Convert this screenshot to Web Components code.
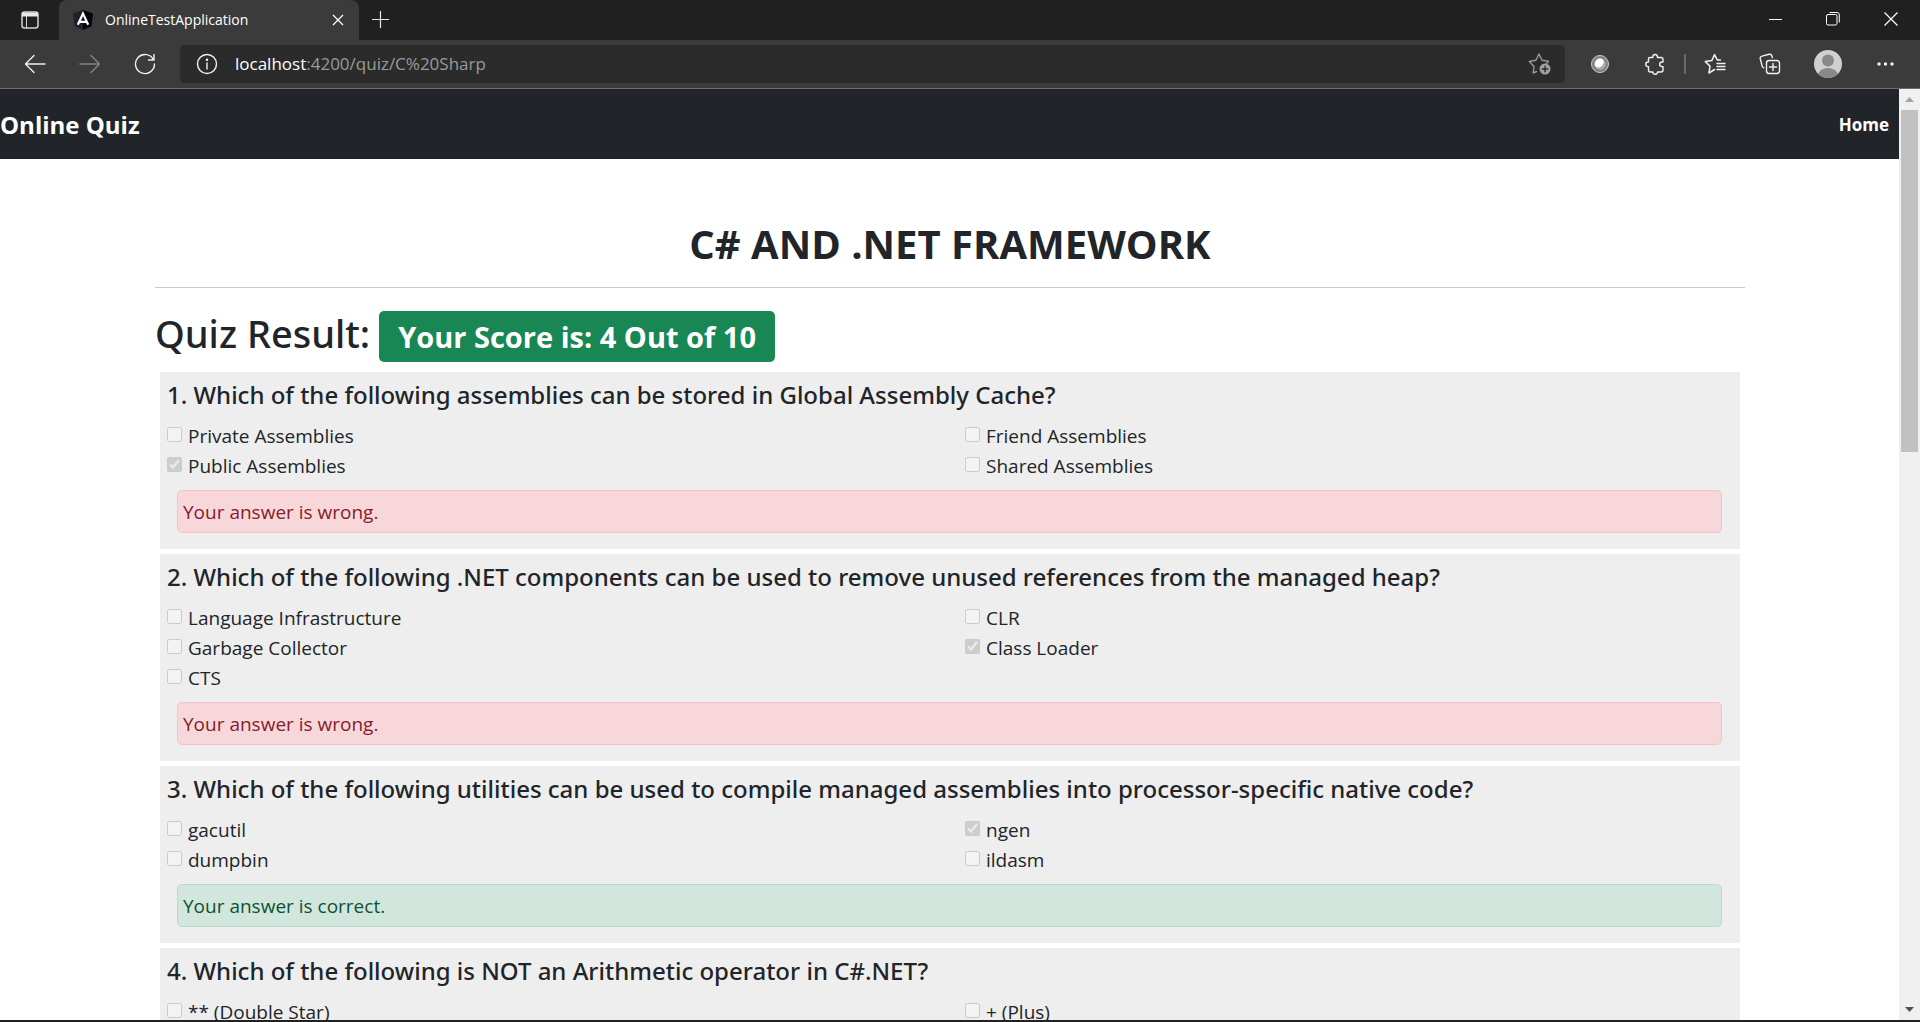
<!DOCTYPE html>
<html lang="en">
<head>
<meta charset="utf-8">
<title>OnlineTestApplication</title>
<style>
  html, body { margin: 0; height: 100%; }
  body { overflow: hidden; background: #212121; font-family: "Open Sans", "Noto Sans", sans-serif; color: #212529; }
</style>
</head>
<body>
<browser-window>
  <browser-tabs slot="tabs">OnlineTestApplication</browser-tabs>
  <browser-toolbar slot="toolbar" host="localhost" path=":4200/quiz/C%20Sharp"></browser-toolbar>
  <app-navbar>Online Quiz</app-navbar>
  <quiz-page heading="C# AND .NET FRAMEWORK" score="4" total="10"></quiz-page>
</browser-window>

<script>
const define = (name, html, setup) => {
  const template = document.createElement('template');
  template.innerHTML = html;
  customElements.define(name, class extends HTMLElement {
    constructor() {
      super();
      this.attachShadow({ mode: 'open' }).append(template.content.cloneNode(true));
    }
    connectedCallback() { if (setup) setup(this, this.shadowRoot); }
  });
};

define('browser-window', `
  <style>
    :host { display: flex; flex-direction: column; height: 100vh; }
    .view { flex: 1; min-height: 0; display: flex; background: #fff; border-bottom: 2px solid #212121; }
    .content { flex: 1; min-width: 0; overflow: hidden; }
  </style>
  <slot name="tabs"></slot>
  <slot name="toolbar"></slot>
  <div class="view">
    <div class="content"><slot></slot></div>
    <page-scrollbar></page-scrollbar>
  </div>`);

define('page-scrollbar', `
  <style>
    :host { display: flex; flex-direction: column; align-items: stretch; width: 21px; background: #f0f0f0; }
    button { all: unset; height: 21px; display: flex; align-items: center; justify-content: center; }
    .track { flex: 1; padding: 0 2px; display: flex; flex-direction: column; }
    .thumb { flex: 5; background: #c1c1c1; }
    .rest { flex: 8; }
  </style>
  <button aria-label="Scroll up"><svg width="9" height="5"><path d="M0 5 4.500 0 9 5z" fill="#a3a3a3"/></svg></button>
  <div class="track"><div class="thumb"></div><div class="rest"></div></div>
  <button aria-label="Scroll down"><svg width="9" height="5"><path d="M0 0h9L4.500 5z" fill="#505050"/></svg></button>`);

define('browser-tabs', `
  <style>
    :host { display: flex; height: 40px; background: #202020; color: #fff; font-size: 14px; }
    button { all: unset; width: 58px; height: 38px; display: flex; align-items: center; justify-content: center; }
    svg { fill: none; stroke: #fff; }
    .actions { width: 59px; height: 40px; }
    .tab { display: flex; align-items: center; gap: 12px; width: 300px; padding: 0 14px; box-sizing: border-box;
      background: #3b3b3b; border-radius: 8px 8px 0 0; }
    .name { flex: 1; line-height: 20px; }
    .close { width: 14px; height: 20px; }
    .add { width: 42px; height: 40px; }
    .space { flex: 1; }
  </style>
  <button class="actions" aria-label="Tab actions"><svg width="20" height="20"><rect x="2" y="2" width="16" height="16" rx="2.500" stroke="#d4d4d4" stroke-width="1.500"/><path d="M2 3.500h16M2 5.500h16" stroke="#e8e8e8" stroke-width="2"/><path d="M6.500 6v12" stroke="#d4d4d4"/></svg></button>
  <div class="tab">
    <svg width="20" height="20" stroke="none"><path d="M10 0 0 3.500 1.500 16.300 10 20z" fill="#1d2029" stroke="none"/><path d="M10 0 20 3.500 18.500 16.300 10 20z" fill="#05060c" stroke="none"/><path d="M4.800 14.800 10 3.600l5.200 11.200M7 11.800h6" stroke="#fff" stroke-width="2.200"/></svg>
    <span class="name"><slot></slot></span>
    <button class="close" aria-label="Close tab"><svg width="12" height="12"><path d="m1 1 10 10M11 1 1 11" stroke-width="1.300"/></svg></button>
  </div>
  <button class="add" aria-label="New tab"><svg width="18" height="18"><path d="M9.500 0v17M1 8.500h17" stroke="#e8e8e8" stroke-width="1.200"/></svg></button>
  <div class="space"></div>
  <button aria-label="Minimize"><svg width="14" height="14"><path d="M1 7.500h13"/></svg></button>
  <button aria-label="Restore"><svg width="14" height="14"><rect x=".5" y="2.500" width="10.500" height="10.500" rx="1.500"/><path d="M3.500.5H11A2.300 2.300 0 0 1 13.300 2.800V10.500"/></svg></button>
  <button aria-label="Close"><svg width="14" height="14"><path d="m.5.5 13 13M13.500.5l-13 13" stroke-width="1.200"/></svg></button>`);

define('browser-toolbar', `
  <style>
    :host { display: flex; align-items: center; gap: 15px; height: 48px; padding: 0 14px 0 15px; background: #3b3b3b; border-bottom: 1px solid #6c6c6c; }
    button { all: unset; width: 40px; height: 40px; display: flex; align-items: center; justify-content: center; }
    svg { flex: none; fill: none; stroke: #f0f0f0; stroke-width: 1.400; stroke-linejoin: round; stroke-linecap: round; }
    .bar { flex: 1; min-width: 0; height: 38px; display: flex; align-items: center; gap: 17px; background: #2b2b2b; border-radius: 5px; padding: 0 5px 0 16px; }
    .address { flex: 1; display: flex; font-size: 17px; line-height: 24px; color: #fff; white-space: pre; }
    .path { color: #9a9a9a; }
    .sep { width: 2px; height: 20px; background: #6a6a6a; margin: 0 -6px; }
    .profile { width: 46px; }
  </style>
  <button aria-label="Back"><svg width="22" height="20"><path d="M21 10H2M10 1.500 1.500 10l8.500 8.500"/></svg></button>
  <button aria-label="Forward"><svg width="22" height="20" style="stroke:#828282"><path d="M1 10h19M12 1.500l8.500 8.500-8.500 8.500"/></svg></button>
  <button aria-label="Refresh"><svg width="22" height="22"><path d="M19.600 7A9.500 9.500 0 1 0 20.500 11M20 1.500V7h-5.500"/></svg></button>
  <div class="bar">
    <svg width="22" height="22"><circle cx="11" cy="11" r="9.500"/><path d="M11 10v6" /><circle cx="11" cy="6.800" r=".6" fill="#fff"/></svg>
    <div class="address"><span class="host"></span><span class="path"></span></div>
    <button aria-label="Add to favorites"><svg width="24" height="24" style="stroke:#9a9a9a"><path d="M8.500 19.500 5.200 21l.8-6.600L1.300 9.500l6.600-1.200L11 2l3 6.300 6.500.9-2 2.300"/><circle cx="17" cy="17" r="5.500" fill="#a0a0a0" stroke="none"/><path d="M14.300 17h5.400M17 14.300v5.400" stroke="#2b2b2b"/></svg></button>
  </div>
  <button aria-label="Extension"><svg width="20" height="20" stroke="none"><circle cx="10" cy="10" r="8.500" fill="#7d7d7d" stroke="#cfcfcf" stroke-width="1"/><circle cx="10" cy="10" r="6" fill="#a8a8a8" stroke="none"/><ellipse cx="9.300" cy="9" rx="4" ry="5" transform="rotate(40 9.300 9)" fill="#fff" stroke="none"/></svg></button>
  <button aria-label="Extensions"><svg width="22" height="22"><path d="M6 4.500h2.800V3.800a2.300 2.300 0 0 1 4.600 0v.7H17a2 2 0 0 1 2 2V9h-1a2.300 2.300 0 0 0 0 4.600h1V17a2 2 0 0 1-2 2h-3.500a2.300 2.300 0 0 1-4.600 0H6.500a2 2 0 0 1-2-2v-3.400H4A2.300 2.300 0 0 1 4 9h.5V6A1.500 1.500 0 0 1 6 4.500z"/></svg></button>
  <div class="sep"></div>
  <button aria-label="Favorites"><svg width="22" height="22"><path d="M10.500 16.500 5 20l1-6.900L1.300 8.600l6.500-1L10.500 1.500l2.900 5.600h3M13 10.500h8M13 13.500h8M13 16.500h8" stroke-width="1.500"/></svg></button>
  <button aria-label="Collections"><svg width="22" height="22"><rect x="7.500" y="7.500" width="13" height="13" rx="2.500"/><path d="M14 10.500v7M10.500 14h7M4.800 14.800a3 3 0 0 1-1.700-2L1.300 6a2.300 2.300 0 0 1 1.700-2.900L10 1.300a2.500 2.500 0 0 1 3 1.800l.3 1.400"/></svg></button>
  <button class="profile" aria-label="Profile"><svg width="28" height="28"><defs><clipPath id="disc"><circle cx="14" cy="14" r="14"/></clipPath></defs><g clip-path="url(#disc)" stroke="none"><rect width="28" height="28" fill="#d2d0ce"/><circle cx="14" cy="10.500" r="6" fill="#8a8886"/><ellipse cx="14" cy="25.500" rx="10" ry="7.500" fill="#8a8886"/></g></svg></button>
  <button aria-label="Settings and more"><svg width="18" height="6"><g fill="#f0f0f0" stroke="none"><circle cx="2" cy="3" r="1.700"/><circle cx="8.500" cy="3" r="1.700"/><circle cx="15" cy="3" r="1.700"/></g></svg></button>`,
  (el, root) => {
    root.querySelector('.host').textContent = el.getAttribute('host');
    root.querySelector('.path').textContent = el.getAttribute('path');
  });

define('app-navbar', `
  <style>
    :host { display: flex; align-items: center; justify-content: space-between; height: 70px; background: #212529; padding-right: 10px; }
    a { color: #fff; text-decoration: none; font-weight: 700; }
    .brand { font-size: 24px; }
    .link { font-size: 17px; }
  </style>
  <a class="brand" href="#"><slot></slot></a>
  <nav><a class="link" href="#">Home</a></nav>`);

define('answer-alert', `
  <style>
    :host { display: block; margin: 9px 18px 0 17px; padding: 6px 5px 5px; border: 1px solid; border-radius: 5px; font-size: 19px; line-height: 30px; }
    :host([result="wrong"]) { color: #842029; background: #f8d7da; border-color: #f5c2c7; }
    :host([result="correct"]) { color: #0f5132; background: #d1e7dd; border-color: #badbcc; }
  </style>
  <slot></slot>`);

define('quiz-question', `
  <style>
    :host { display: block; background: #eee; margin: 0 5px 5px; padding: 5px 0 16px; }
    h4 { margin: 0 0 8px; padding-left: 7px; font: 500 24px/36px "Noto Sans", "Open Sans", sans-serif; }
    .options { display: grid; grid-template-columns: 1fr 1fr; column-gap: 23px; padding-left: 7px; }
    .option { display: flex; align-items: flex-start; gap: 6px; font-size: 19px; line-height: 30px; }
    input { width: 15px; height: 15px; margin: 6px 0 0; }
  </style>
  <h4></h4>
  <div class="options"></div>`);

const questions = [
  { text: 'Which of the following assemblies can be stored in Global Assembly Cache?',
    options: ['Private Assemblies', 'Friend Assemblies', 'Public Assemblies', 'Shared Assemblies'], picked: 2, result: 'wrong' },
  { text: 'Which of the following .NET components can be used to remove unused references from the managed heap?',
    options: ['Language Infrastructure', 'CLR', 'Garbage Collector', 'Class Loader', 'CTS'], picked: 3, result: 'wrong' },
  { text: 'Which of the following utilities can be used to compile managed assemblies into processor-specific native code?',
    options: ['gacutil', 'ngen', 'dumpbin', 'ildasm'], picked: 1, result: 'correct' },
  { text: 'Which of the following is NOT an Arithmetic operator in C#.NET?',
    options: ['** (Double Star)', '+ (Plus)'], picked: -1, result: '' }
];

define('quiz-page', `
  <style>
    :host { display: block; padding: 61px 154px 0 155px; }
    h1 { margin: 0; font-size: 40px; line-height: 48px; font-weight: 700; text-align: center; }
    hr { margin: 19px 0 23px; border: 0; height: 1px; background: #c8c9ca; }
    .result { display: flex; align-items: baseline; gap: 9px; margin-bottom: 10px; }
    h2 { margin: 0; font: 500 38px/44px "Noto Sans", "Open Sans", sans-serif; }
    .badge { background: #198754; color: #fff; border-radius: 5px; padding: 6px 19px 5px; font-size: 29px; line-height: 40px; font-weight: 700; }
  </style>
  <h1></h1>
  <hr>
  <div class="result"><h2>Quiz Result:</h2><span class="badge"></span></div>
  <div class="list"></div>`,
  (el, root) => {
    root.querySelector('h1').textContent = el.getAttribute('heading');
    root.querySelector('.badge').textContent = `Your Score is: ${el.getAttribute('score')} Out of ${el.getAttribute('total')}`;
    const list = root.querySelector('.list');
    questions.forEach((q, n) => {
      const card = document.createElement('quiz-question');
      list.append(card);
      const r = card.shadowRoot;
      r.querySelector('h4').textContent = `${n + 1}. ${q.text}`;
      q.options.forEach((text, i) => {
        const row = document.createElement('div');
        row.className = 'option';
        const box = document.createElement('input');
        box.type = 'checkbox';
        box.id = `option-${i}`;
        box.disabled = true;
        box.checked = i === q.picked;
        const label = document.createElement('label');
        label.htmlFor = box.id;
        label.textContent = text;
        row.append(box, label);
        r.querySelector('.options').append(row);
      });
      if (q.result) {
        const note = document.createElement('answer-alert');
        note.setAttribute('result', q.result);
        note.textContent = `Your answer is ${q.result}.`;
        r.append(note);
      }
    });
  });
</script>
</body>
</html>
